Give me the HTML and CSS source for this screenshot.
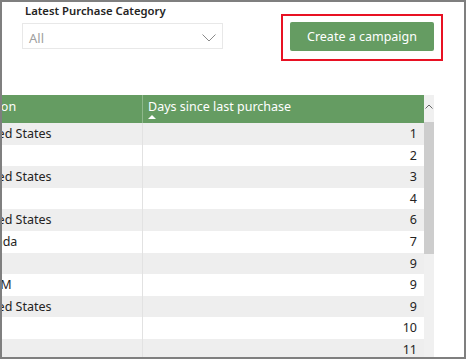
FILE: index.html
```html
<!DOCTYPE html>
<html lang="en">

<head>
    <meta charset="UTF-8">
    <meta name="viewport" content="width=device-width, initial-scale=1.0">
    <title>Customer churn</title>
    <link rel="stylesheet" href="styles.css">
</head>

<body>
    <div class="frame">
        <div class="toolbar">
            <div class="filter">
                <div class="filter-label">Latest Purchase Category</div>
                <div class="dropdown">
                    <span class="dropdown-value">All</span>
                    <svg class="chevron" width="14" height="8" viewBox="0 0 14 8">
                        <path d="M0.5 0.5 L7 7 L13.5 0.5" fill="none" stroke="#8a8a8a" stroke-width="1"/>
                    </svg>
                </div>
            </div>
            <div class="highlight">
                <button class="campaign-btn">Create a campaign</button>
            </div>
        </div>

        <div class="table-area">
            <div class="grid">
                <div class="grid-inner">
                    <div class="row head">
                        <div class="cell loc">Location</div>
                        <div class="cell days">
                            Days since last purchase
                            <span class="sort"></span>
                        </div>
                    </div>
                    <div class="row"><div class="cell loc">United States</div><div class="cell days">1</div></div>
                    <div class="row"><div class="cell loc">Fiji</div><div class="cell days">2</div></div>
                    <div class="row"><div class="cell loc">United States</div><div class="cell days">3</div></div>
                    <div class="row"><div class="cell loc">Iraq</div><div class="cell days">4</div></div>
                    <div class="row"><div class="cell loc">United States</div><div class="cell days">6</div></div>
                    <div class="row"><div class="cell loc">Canada</div><div class="cell days">7</div></div>
                    <div class="row"><div class="cell loc">Mali</div><div class="cell days">9</div></div>
                    <div class="row"><div class="cell loc">Iran M</div><div class="cell days">9</div></div>
                    <div class="row"><div class="cell loc">United States</div><div class="cell days">9</div></div>
                    <div class="row"><div class="cell loc">Iran</div><div class="cell days">10</div></div>
                    <div class="row"><div class="cell loc">Fiji</div><div class="cell days">11</div></div>
                    <div class="row"><div class="cell loc">Iraq</div><div class="cell days">12</div></div>
                </div>
            </div>
            <div class="scrollbar">
                <div class="scroll-up">
                    <svg width="8" height="5" viewBox="0 0 8 5">
                        <path d="M0.5 4.5 L4 1 L7.5 4.5" fill="none" stroke="#666" stroke-width="1"/>
                    </svg>
                </div>
                <div class="scroll-thumb"></div>
            </div>
        </div>
    </div>
</body>

</html>
```

FILE: styles.css
```css
/* report canvas */
body {
    margin: 0;
    font-family: 'Noto Sans', 'Open Sans', sans-serif;
    color: #252423;
    background: #ffffff;
}

.frame {
    width: 466px;
    height: 359px;
    box-sizing: border-box;
    border: 2px solid #7f7f7f;
    overflow: hidden;
    display: flex;
    flex-direction: column;
}

/* top bar: slicer + action button */
.toolbar {
    height: 93px;
    flex: none;
    display: flex;
    justify-content: space-between;
    align-items: flex-start;
}

.filter {
    margin-left: 20px;
}

.filter-label {
    padding-left: 3px;
    font-size: 11.3px;
    font-weight: 600;
    line-height: 17px;
}

.dropdown {
    margin-top: 4px;
    width: 201px;
    height: 26px;
    box-sizing: border-box;
    border: 1px solid #e8e8e8;
    display: flex;
    align-items: center;
    justify-content: space-between;
    padding: 3px 6px 0 6px;
}

.dropdown-value {
    font-size: 13px;
    color: #a0a0a0;
}

.highlight {
    margin-top: 12px;
    margin-right: 21px;
    border: 2px solid #e81123;
    padding: 6px 7px 8px 7px;
}

.campaign-btn {
    display: block;
    width: 144px;
    height: 29px;
    border: none;
    border-radius: 2px;
    background-color: #659c62;
    color: #ffffff;
    font-family: inherit;
    font-size: 12.5px;
    padding: 0;
}

/* table visual */
.table-area {
    flex: 1;
    display: flex;
    min-height: 0;
}

.grid {
    width: 422px;
    overflow: hidden;
}

.grid-inner {
    margin-left: -40px;
}

.row {
    display: flex;
    height: 21.6px;
    font-size: 12.5px;
    line-height: 21.6px;
}

.row:nth-child(even) {
    background-color: #eeeeee;
}

.cell {
    box-sizing: border-box;
    white-space: nowrap;
}

.loc {
    width: 181px;
    padding-left: 11px;
    border-right: 1px solid #e2e2e2;
}

.days {
    flex: 1;
    text-align: right;
    padding-right: 7px;
}

.row.head {
    height: 28px;
    background-color: #659c62;
    color: #ffffff;
    line-height: 23px;
}

.row.head .loc {
    padding-left: 4px;
    border-right-color: #8fb88c;
}

.row.head .days {
    text-align: left;
    padding-left: 5px;
    position: relative;
}

.sort {
    position: absolute;
    left: 5px;
    top: 20px;
    width: 0;
    height: 0;
    border-left: 4px solid transparent;
    border-right: 4px solid transparent;
    border-bottom: 4px solid #ffffff;
}

.scrollbar {
    width: 10px;
    background-color: #f0f0f0;
}

.scroll-up {
    height: 27px;
    display: flex;
    justify-content: center;
    padding-top: 9px;
    box-sizing: border-box;
}

.scroll-thumb {
    height: 132px;
    background-color: #cdcdcd;
}
```
